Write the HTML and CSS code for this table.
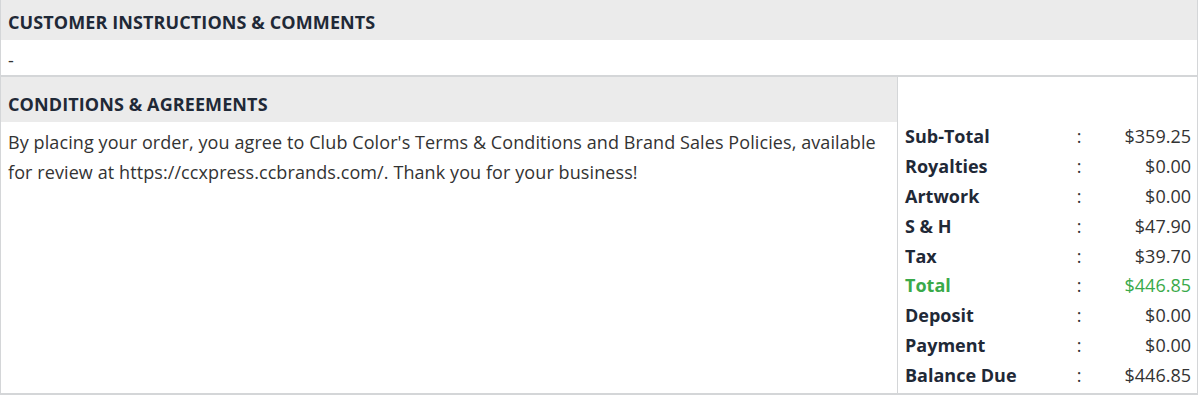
FILE: index.html
```html
<!DOCTYPE html>
<html lang="en">
<head>
  <meta charset="UTF-8">
  <title>Order Summary</title>
  <link rel="stylesheet" href="styles.css">
</head>
<body>
  <div class="order-box">
    <div class="notes">
      <div class="section-title">Customer Instructions &amp; Comments</div>
      <div class="notes-text">-</div>
    </div>

    <div class="terms-row">
      <div class="terms">
        <div class="section-title tall">Conditions &amp; Agreements</div>
        <p class="terms-text">By placing your order, you agree to Club Color's Terms &amp; Conditions and Brand Sales Policies, available for review at https://ccxpress.ccbrands.com/. Thank you for your business!</p>
      </div>
      <div class="totals">
        <div class="total-line"><span class="label">Sub-Total</span><span class="colon">:</span><span class="amount">$359.25</span></div>
        <div class="total-line"><span class="label">Royalties</span><span class="colon">:</span><span class="amount">$0.00</span></div>
        <div class="total-line"><span class="label">Artwork</span><span class="colon">:</span><span class="amount">$0.00</span></div>
        <div class="total-line"><span class="label">S &amp; H</span><span class="colon">:</span><span class="amount">$47.90</span></div>
        <div class="total-line"><span class="label">Tax</span><span class="colon">:</span><span class="amount">$39.70</span></div>
        <div class="total-line grand"><span class="label">Total</span><span class="colon">:</span><span class="amount">$446.85</span></div>
        <div class="total-line"><span class="label">Deposit</span><span class="colon">:</span><span class="amount">$0.00</span></div>
        <div class="total-line"><span class="label">Payment</span><span class="colon">:</span><span class="amount">$0.00</span></div>
        <div class="total-line"><span class="label">Balance Due</span><span class="colon">:</span><span class="amount">$446.85</span></div>
      </div>
    </div>
  </div>
</body>
</html>
```

FILE: styles.css
```css
body {
  margin: 0;
  font-family: "Open Sans", Arial, sans-serif;
  color: #333;
  background: #fff;
}
.order-box {
  width: 1196px;
  border-left: 1px solid #d4d6d8;
  border-right: 1px solid #d4d6d8;
  border-bottom: 2px solid #d4d6d8;
}
.section-title {
  background-color: #ebebeb;
  height: 40px;
  line-height: 45px;
  padding-left: 7px;
  font-size: 18px;
  font-weight: 700;
  letter-spacing: 0.1px;
  text-transform: uppercase;
  color: #1f2937;
}
.section-title.tall {
  height: 45px;
  line-height: 54px;
}
.notes-text {
  height: 35px;
  line-height: 40px;
  padding-left: 7px;
  font-size: 18px;
  border-bottom: 2px solid #d4d6d8;
}
.terms-row {
  display: grid;
  grid-template-columns: 897px 1fr;
  height: 316px;
}
.terms {
  border-right: 1px solid #d4d6d8;
}
.terms-text {
  margin: 0;
  padding: 5px 8px 0 7px;
  font-size: 18px;
  letter-spacing: 0.09px;
  line-height: 30px;
}
.totals {
  padding: 44px 6px 0 7px;
}
.total-line {
  display: grid;
  grid-template-columns: 166px 16px 1fr;
  height: 29.9px;
  line-height: 30px;
  font-size: 18px;
}
.total-line .label {
  font-weight: 700;
  color: #1f2937;
}
.total-line .colon {
  text-align: center;
}
.total-line .amount {
  text-align: right;
}
.total-line.grand .label,
.total-line.grand .amount {
  color: #3aaa4a;
}
```
